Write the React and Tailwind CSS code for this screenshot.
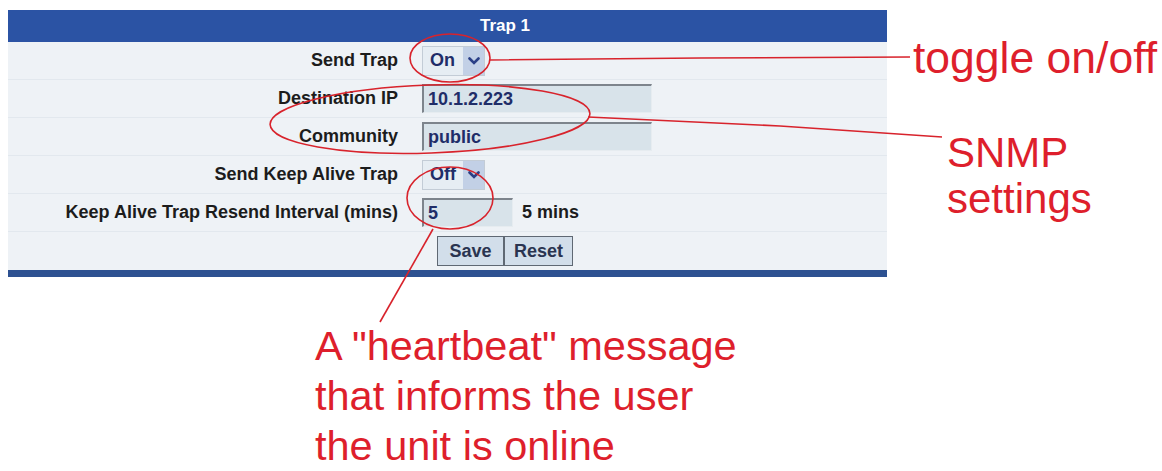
import React from 'react';

const label = "font-['Liberation_Sans',Arial,sans-serif] font-bold text-[18px] text-[#1c1c1c]";
const redText = "font-['Liberation_Sans',Arial,sans-serif] text-[#de1f2c]";

function Select({ value }) {
  return (
    <div className="flex h-[30px] border border-[#c3ccd6] bg-[#e6edf3]">
      <div className={`${label} text-[#1f2d68] flex items-center pl-[7px] pr-[10px] w-[40px]`}>{value}</div>
      <div className="w-[21px] bg-[#c2d0e6] flex items-center justify-center">
        <svg width="12" height="8" viewBox="0 0 12 8">
          <path d="M1.5 1.5 L6 6 L10.5 1.5" fill="none" stroke="#2a3f86" strokeWidth="2.6" strokeLinecap="round" />
        </svg>
      </div>
    </div>
  );
}

function Field({ value, width }) {
  return (
    <div
      className={`${label} text-[#1f2d68] h-[29px] flex items-center pl-[4px] bg-[#d8e3ea] border-t-2 border-l-2 border-[#7d848c] border-r border-b border-r-[#e6ecf0] border-b-[#e6ecf0]`}
      style={{ width }}
    >
      {value}
    </div>
  );
}

function Row({ name, children }) {
  return (
    <div className="flex h-[38px] border-b border-[#e2e8ee]">
      <div className={`${label} w-[390px] flex items-center justify-end`}>{name}</div>
      <div className="flex items-center gap-[9px] pl-[24px]">{children}</div>
    </div>
  );
}

export default function App() {
  return (
    <div className="relative w-[1162px] h-[471px] bg-white overflow-hidden">
      <div className="flex pt-[10px]">
        {/* panel + heartbeat note */}
        <div className="flex flex-col">
          <div className="ml-[8px] w-[879px] bg-[#eef2f6]">
            <div className="h-[32px] bg-[#2b53a4] flex items-center pl-[472px]">
              <span className="font-['Liberation_Sans',Arial,sans-serif] font-bold text-[17px] text-white">Trap 1</span>
            </div>
            <Row name="Send Trap"><Select value="On" /></Row>
            <Row name="Destination IP"><Field value="10.1.2.223" width={230} /></Row>
            <Row name="Community"><Field value="public" width={230} /></Row>
            <Row name="Send Keep Alive Trap"><Select value="Off" /></Row>
            <Row name="Keep Alive Trap Resend Interval (mins)">
              <Field value="5" width={91} />
              <span className={label}>5 mins</span>
            </Row>
            <div className="flex h-[38px] items-center pl-[429px]">
              <div className="flex border border-[#5f6873]">
                <div className={`${label} text-[#2a3450] bg-[#d2deea] h-[28px] w-[67px] flex items-center justify-center border-r-2 border-[#5f6873]`}>Save</div>
                <div className={`${label} text-[#2a3450] bg-[#d2deea] h-[28px] w-[67px] flex items-center justify-center`}>Reset</div>
              </div>
            </div>
            <div className="h-[7px] bg-[#2d5191]" />
          </div>
          <div className={`${redText} text-[41.5px] leading-[50px] ml-[315px] mt-[44px]`}>
            <div>A "heartbeat" message</div>
            <div>that informs the user</div>
            <div>the unit is online</div>
          </div>
        </div>

        {/* right notes */}
        <div className="flex flex-col ml-[26px]">
          <div className={`${redText} text-[44.5px] leading-[48px] mt-[24px]`}>toggle on/off</div>
          <div className={`${redText} text-[42px] leading-[46px] ml-[34px] mt-[48px]`}>
            <div>SNMP</div>
            <div>settings</div>
          </div>
        </div>
      </div>

      {/* hand-drawn callouts */}
      <svg className="absolute top-0 left-0 pointer-events-none" width="1162" height="471" viewBox="0 0 1162 471">
        <g fill="none" stroke="#d8232c" strokeWidth="1.6">
          <ellipse cx="450" cy="58" rx="40" ry="24" />
          <path d="M489 60 L700 58 L910 57" />
          <ellipse cx="430" cy="119" rx="160" ry="34" transform="rotate(-2 430 119)" />
          <path d="M588 117 L780 126 L942 137" />
          <ellipse cx="450" cy="198" rx="43" ry="31" />
          <path d="M433 229 L380 322" />
        </g>
      </svg>
    </div>
  );
}
